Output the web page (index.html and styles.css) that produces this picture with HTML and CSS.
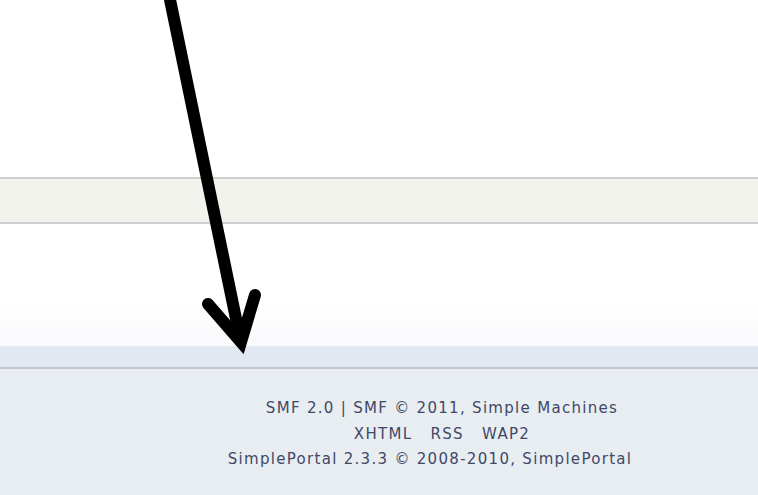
FILE: index.html
```html
<!DOCTYPE html>
<html lang="en">
<head>
    <meta charset="UTF-8">
    <title>SMF footer</title>
    <link rel="stylesheet" href="styles.css">
</head>
<body>
    <div class="top"></div>
    <div class="strip"></div>
    <div class="content"></div>
    <div class="bar"></div>
    <div class="footer">
        <p>SMF 2.0 | SMF &copy; 2011, Simple Machines</p>
        <p>XHTML&nbsp;&nbsp; RSS&nbsp;&nbsp; WAP2</p>
        <p class="portal">SimplePortal 2.3.3 &copy; 2008-2010, SimplePortal</p>
    </div>

    <svg class="arrow" width="758" height="495" viewBox="0 0 758 495">
        <path d="M168 -10 L240 338" />
        <path d="M208 304 L241 342 L255 295" />
    </svg>
</body>
</html>
```

FILE: styles.css
```css
body {
    margin: 0;
    width: 758px;
    height: 495px;
    overflow: hidden;
    position: relative;
    background-color: #ffffff;
    font-family: "DejaVu Sans", Verdana, sans-serif;
}
.top {
    height: 177px;
}
.strip {
    height: 43px;
    background-color: #f3f3ee;
    border-top: 2px solid #cfcfcf;
    border-bottom: 2px solid #cfcfcf;
}
.content {
    height: 122px;
    background: linear-gradient(to bottom, #ffffff 65%, #f8f9fb);
}
.bar {
    height: 21px;
    background-color: #e2e8f1;
    border-bottom: 2px solid #c4c6c9;
}
.footer {
    height: 100px;
    background-color: #e8edf1;
    color: #404868;
    font-size: 15px;
    letter-spacing: 1.3px;
    text-align: center;
    padding: 27px 0 0 126px;
}
.footer p {
    margin: 0;
    line-height: 25.5px;
}
.footer p.portal {
    margin-right: 24px;
}
.arrow {
    position: absolute;
    top: 0;
    left: 0;
}
.arrow path {
    fill: none;
    stroke: #000;
    stroke-width: 12;
    stroke-linecap: round;
    stroke-linejoin: miter;
}
```
